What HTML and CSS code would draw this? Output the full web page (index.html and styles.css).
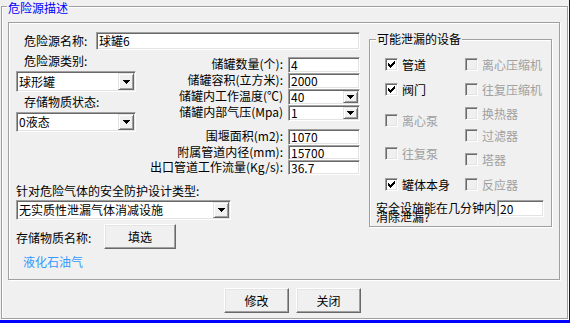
FILE: index.html
```html
<!DOCTYPE html>
<html lang="zh-CN">
<head>
<meta charset="utf-8">
<title>危险源描述</title>
<link rel="stylesheet" href="styles.css">
</head>
<body>
<div class="window">
  <div class="outer etched">
    <div class="group-title outer-title">危险源描述</div>
    <div class="panel etched">
      <div class="main">
        <div class="name-row">
          <span class="name-lbl">危险源名称:</span>
          <div class="field name-input">球罐6</div>
        </div>
        <div class="mid">
          <div class="left-sub">
            <div class="sub-lbl type-lbl">危险源类别:</div>
            <div class="combo combo-type">
              <span class="combo-text">球形罐</span>
              <span class="drop"><svg width="7" height="4" viewBox="0 0 7 4"><rect x="0" y="0" width="7" height="1"/><rect x="1" y="1" width="5" height="1"/><rect x="2" y="2" width="3" height="1"/><rect x="3" y="3" width="1" height="1"/></svg></span>
            </div>
            <div class="sub-lbl state-lbl">存储物质状态:</div>
            <div class="combo combo-state">
              <span class="combo-text">0液态</span>
              <span class="drop"><svg width="7" height="4" viewBox="0 0 7 4"><rect x="0" y="0" width="7" height="1"/><rect x="1" y="1" width="5" height="1"/><rect x="2" y="2" width="3" height="1"/><rect x="3" y="3" width="1" height="1"/></svg></span>
            </div>
          </div>
          <div class="mid-sub">
            <div class="specs specs-a">
              <span class="spec-lbl">储罐数量(个):</span>
              <div class="field spec-input">4</div>
              <span class="spec-lbl">储罐容积(立方米):</span>
              <div class="field spec-input">2000</div>
              <span class="spec-lbl">储罐内工作温度(℃)</span>
              <div class="combo spec-combo">
                <span class="combo-text">40</span>
                <span class="drop"><svg width="7" height="4" viewBox="0 0 7 4"><rect x="0" y="0" width="7" height="1"/><rect x="1" y="1" width="5" height="1"/><rect x="2" y="2" width="3" height="1"/><rect x="3" y="3" width="1" height="1"/></svg></span>
              </div>
              <span class="spec-lbl">储罐内部气压(Mpa)</span>
              <div class="combo spec-combo">
                <span class="combo-text">1</span>
                <span class="drop"><svg width="7" height="4" viewBox="0 0 7 4"><rect x="0" y="0" width="7" height="1"/><rect x="1" y="1" width="5" height="1"/><rect x="2" y="2" width="3" height="1"/><rect x="3" y="3" width="1" height="1"/></svg></span>
              </div>
            </div>
            <div class="specs specs-b">
              <span class="spec-lbl">围堰面积(m2):</span>
              <div class="field spec-input">1070</div>
              <span class="spec-lbl">附属管道内径(mm):</span>
              <div class="field spec-input">15700</div>
              <span class="spec-lbl">出口管道工作流量(Kg/s):</span>
              <div class="field spec-input">36.7</div>
            </div>
          </div>
        </div>
        <div class="protect-lbl">针对危险气体的安全防护设计类型:</div>
        <div class="combo combo-protect">
          <span class="combo-text">无实质性泄漏气体消减设施</span>
          <span class="drop"><svg width="7" height="4" viewBox="0 0 7 4"><rect x="0" y="0" width="7" height="1"/><rect x="1" y="1" width="5" height="1"/><rect x="2" y="2" width="3" height="1"/><rect x="3" y="3" width="1" height="1"/></svg></span>
        </div>
        <div class="material-row">
          <span class="material-lbl">存储物质名称:</span>
          <button class="btn btn-pick">填选</button>
        </div>
        <div class="material-name">液化石油气</div>
      </div>

      <div class="devices etched">
        <div class="group-title devices-title">可能泄漏的设备</div>
        <div class="chk-cols">
          <div class="chk-col col-a">
            <div class="chk"><span class="box"><svg width="7" height="7" viewBox="0 0 7 7"><rect x="0" y="2" width="1" height="3"/><rect x="1" y="3" width="1" height="3"/><rect x="2" y="4" width="1" height="3"/><rect x="3" y="3" width="1" height="3"/><rect x="4" y="2" width="1" height="3"/><rect x="5" y="1" width="1" height="3"/><rect x="6" y="0" width="1" height="3"/></svg></span><span>管道</span></div>
            <div class="chk"><span class="box"><svg width="7" height="7" viewBox="0 0 7 7"><rect x="0" y="2" width="1" height="3"/><rect x="1" y="3" width="1" height="3"/><rect x="2" y="4" width="1" height="3"/><rect x="3" y="3" width="1" height="3"/><rect x="4" y="2" width="1" height="3"/><rect x="5" y="1" width="1" height="3"/><rect x="6" y="0" width="1" height="3"/></svg></span><span>阀门</span></div>
            <div class="chk disabled"><span class="box"></span><span>离心泵</span></div>
            <div class="chk disabled"><span class="box"></span><span>往复泵</span></div>
            <div class="chk"><span class="box"><svg width="7" height="7" viewBox="0 0 7 7"><rect x="0" y="2" width="1" height="3"/><rect x="1" y="3" width="1" height="3"/><rect x="2" y="4" width="1" height="3"/><rect x="3" y="3" width="1" height="3"/><rect x="4" y="2" width="1" height="3"/><rect x="5" y="1" width="1" height="3"/><rect x="6" y="0" width="1" height="3"/></svg></span><span>罐体本身</span></div>
          </div>
          <div class="chk-col col-b">
            <div class="chk disabled"><span class="box"></span><span>离心压缩机</span></div>
            <div class="chk disabled"><span class="box"></span><span>往复压缩机</span></div>
            <div class="chk disabled"><span class="box"></span><span>换热器</span></div>
            <div class="chk disabled"><span class="box"></span><span>过滤器</span></div>
            <div class="chk disabled"><span class="box"></span><span>塔器</span></div>
            <div class="chk disabled"><span class="box"></span><span>反应器</span></div>
          </div>
        </div>
        <div class="safe-row">
          <div class="safe-text">安全设施能在几分钟内<br>消除泄漏?</div>
          <div class="field safe-input">20</div>
        </div>
      </div>
    </div>
    <div class="actions">
      <button class="btn btn-action">修改</button>
      <button class="btn btn-action">关闭</button>
    </div>
  </div>
</div>
</body>
</html>
```

FILE: styles.css
```css
* { box-sizing: border-box; }
html, body { margin: 0; padding: 0; }
body {
  width: 570px;
  height: 323px;
  overflow: hidden;
  background: #f0f0f0;
  color: #000;
  font-family: "Noto Sans CJK SC", "Noto Sans", sans-serif;
  font-size: 12px;
  line-height: 14px;
}
.window {
  width: 570px;
  height: 323px;
  border-right: 1px solid #0000ff;
  border-bottom: 3px solid #0000ff;
  padding: 6px 0 0 1px;
}
.etched {
  border: 1px solid #a0a0a0;
  box-shadow: inset 1px 1px 0 #fff, 1px 1px 0 #fff;
}
.outer { width: 567px; height: 313px; }
.group-title {
  display: block;
  width: max-content;
  background: #f0f0f0;
  padding: 0 1px;
  line-height: 14px;
  white-space: nowrap;
}
.outer-title { margin: -6px 0 0 5px; color: #0000ff; }

.panel {
  margin: 7px 0 0 6px;
  width: 552px;
  height: 258px;
  display: flex;
}
.main { width: 360px; flex: none; display: flex; flex-direction: column; }

/* sunken field */
.field, .combo {
  border: 1px solid;
  border-color: #a0a0a0 #fff #fff #a0a0a0;
  box-shadow: inset 1px 1px 0 #696969, inset -1px -1px 0 #e3e3e3;
  background: #fff;
  white-space: nowrap;
}
.field { padding-left: 2px; display: flex; align-items: center; line-height: 12px; }

.name-row { display: flex; align-items: center; margin-top: 9px; padding-left: 15px; }
.name-lbl { width: 72px; white-space: nowrap; }
.name-input { width: 264px; height: 18px; }

.mid { display: flex; }
.left-sub { width: 127px; padding-left: 7px; flex: none; }
.sub-lbl { padding-left: 8px; line-height: 16px; white-space: nowrap; }
.type-lbl { margin-top: 3px; }
.state-lbl { margin-top: 2px; }

.combo { display: flex; align-items: center; padding: 1px; }
.combo-text { flex: 1; padding-left: 1px; line-height: 12px; }
.combo-type { width: 120px; height: 21px; margin-top: 2px; }
.combo-state { width: 120px; height: 20px; margin-top: 2px; }
.drop {
  flex: none;
  width: 16px;
  height: 100%;
  display: flex;
  align-items: center;
  justify-content: center;
  background: #f0f0f0;
  border: 1px solid;
  border-color: #e3e3e3 #696969 #696969 #e3e3e3;
  box-shadow: inset 1px 1px 0 #fff, inset -1px -1px 0 #a0a0a0;
}
.drop svg { display: block; fill: #000; shape-rendering: crispEdges; }

.mid-sub { width: 224px; flex: none; }
.specs {
  display: grid;
  grid-template-columns: 147px 72px;
  column-gap: 5px;
  align-items: center;
}
.specs-a { margin-top: 7px; grid-template-rows: 16px 16px 16px 16px; }
.specs-b { margin-top: 8px; grid-template-rows: 16px 15px 15px; }
.spec-lbl { justify-self: end; white-space: nowrap; line-height: 12px; margin-top: -2px; }
.spec-input, .spec-combo { height: 100%; }
.spec-combo .drop { width: 15px; }

.protect-lbl { margin-top: 8px; padding-left: 7px; line-height: 16px; white-space: nowrap; }
.combo-protect { width: 215px; height: 20px; margin: 1px 0 0 7px; }

.material-row { display: flex; align-items: center; margin-top: 4px; padding-left: 7px; }
.material-lbl { width: 88px; white-space: nowrap; padding-top: 3px; }
.btn {
  font: inherit;
  color: #000;
  background: #f0f0f0;
  border: 1px solid;
  border-color: #fff #696969 #696969 #fff;
  box-shadow: inset -1px -1px 0 #a0a0a0, inset 1px 1px 0 #e3e3e3;
  padding: 0;
  margin: 0;
  line-height: 14px;
}
.btn-pick { width: 72px; height: 25px; }
.material-name { margin-top: 5px; padding-left: 14px; line-height: 16px; color: #3399ff; }

.devices { width: 183px; height: 188px; margin-top: 16px; flex: none; }
.devices-title { margin: -8px 0 0 6px; }
.chk-cols { display: flex; padding-left: 15px; margin-top: 12px; }
.chk-col { display: flex; flex-direction: column; width: 80px; }
.chk { display: flex; align-items: center; gap: 4px; height: 13px; white-space: nowrap; line-height: 13px; }
.box {
  width: 13px;
  height: 13px;
  flex: none;
  border: 1px solid;
  border-color: #a0a0a0 #fff #fff #a0a0a0;
  box-shadow: inset 1px 1px 0 #696969, inset -1px -1px 0 #e3e3e3;
  background: #fff;
  display: flex;
  align-items: center;
  justify-content: center;
}
.box svg { display: block; fill: #000; shape-rendering: crispEdges; }
.chk.disabled { color: #a0a0a0; }
.chk.disabled .box { background: #f0f0f0; }
.col-a .chk:nth-child(2) { margin-top: 12px; }
.col-a .chk:nth-child(3) { margin-top: 18px; }
.col-a .chk:nth-child(4) { margin-top: 20px; }
.col-a .chk:nth-child(5) { margin-top: 18px; }
.col-b .chk:nth-child(2) { margin-top: 12px; }
.col-b .chk:nth-child(3) { margin-top: 11px; }
.col-b .chk:nth-child(4) { margin-top: 9px; }
.col-b .chk:nth-child(5) { margin-top: 11px; }
.col-b .chk:nth-child(6) { margin-top: 12px; }

.safe-row { display: flex; align-items: flex-start; margin-top: 9px; padding-left: 6px; }
.safe-text { width: 121px; line-height: 9px; margin-top: 3px; white-space: nowrap; }
.safe-input { width: 47px; height: 17px; }

.actions { display: flex; gap: 7px; margin: 8px 0 0 222px; }
.btn-action { width: 65px; height: 25px; }
```
